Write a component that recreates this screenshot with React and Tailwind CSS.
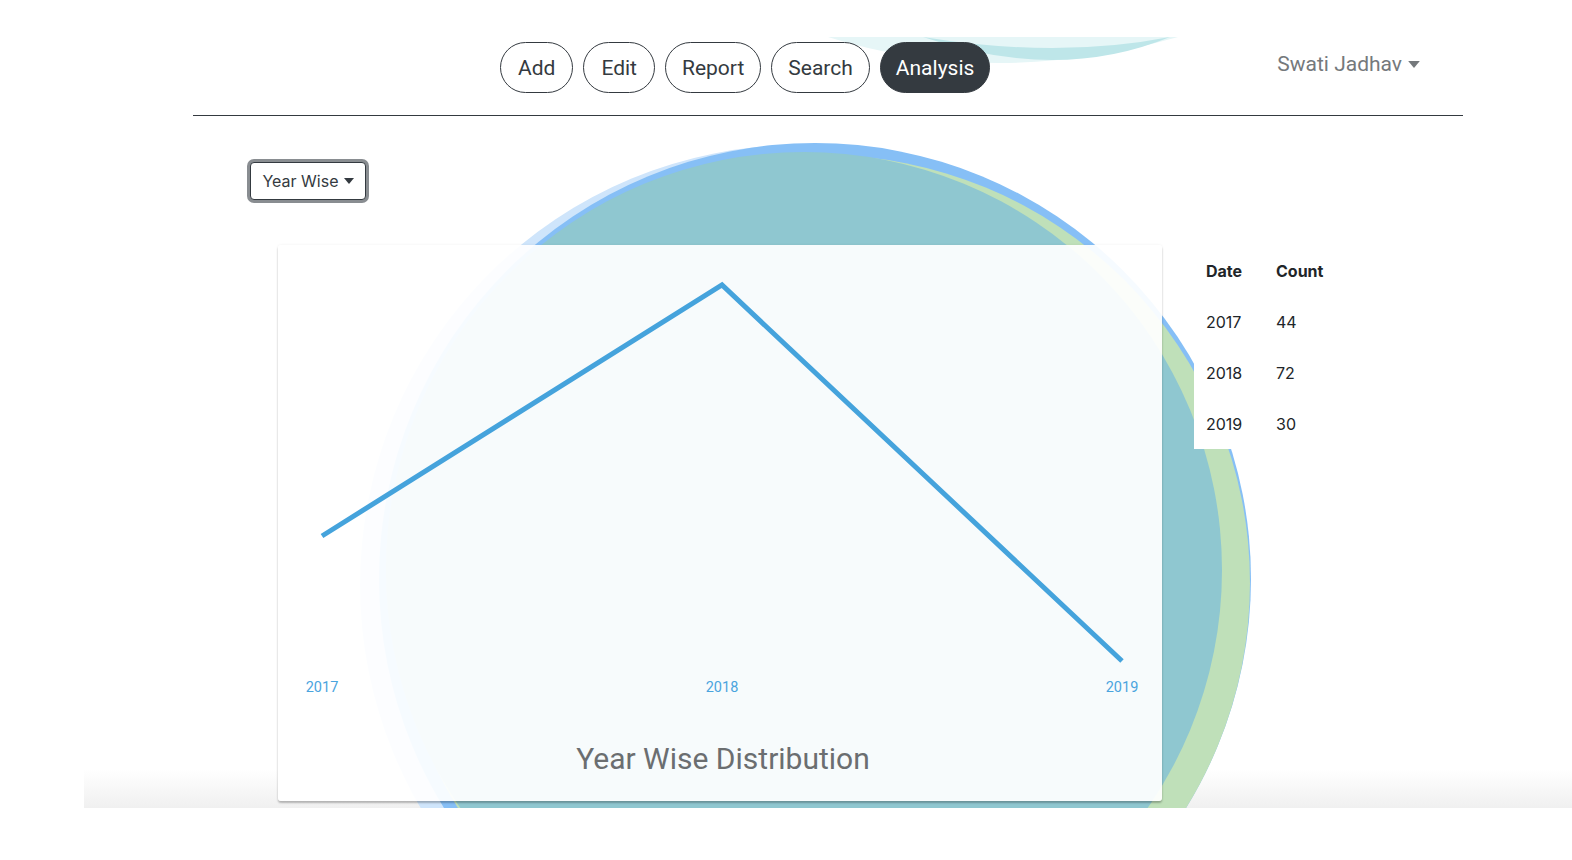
import React from "react";

const years = [
  { date: "2017", count: 44 },
  { date: "2018", count: 72 },
  { date: "2019", count: 30 },
];

const tabs = [
  { label: "Add", pad: "px-[17px]" },
  { label: "Edit", pad: "px-[17px]" },
  { label: "Report", pad: "px-[16px]" },
  { label: "Search", pad: "px-[16px]" },
  { label: "Analysis", pad: "px-[15px]", active: true },
];

function Caret({ className }) {
  return (
    <svg width="10" height="6" viewBox="0 0 10 6" className={className}>
      <path d="M0 0h10L5 6z" fill="currentColor" />
    </svg>
  );
}

function Backdrop() {
  return (
    <>
      {/* wave peeking in at the top */}
      <svg className="absolute left-[744px] top-0" width="350" height="30" viewBox="0 0 350 30">
        <path d="M0 0 Q165 52 350 0 Z" fill="#e6f6f7" />
        <path d="M95 0 Q230 46 342 0 Q230 22 95 0 Z" fill="#bee6e9" />
      </svg>
      {/* big circles behind the chart */}
      <svg className="absolute left-0 top-0" width="1488" height="771" viewBox="0 0 1488 771">
        <circle cx="716" cy="548" r="440" fill="#cfe5fb" />
        <circle cx="731" cy="542" r="436" fill="#86bff6" />
        <circle cx="744" cy="550" r="418" fill="#fcfbc8" />
        <circle cx="738" cy="546" r="428" fill="#bfe0b9" />
        <circle cx="720" cy="533" r="418" fill="#8fc7d0" />
      </svg>
    </>
  );
}

function Chart() {
  const pts = "44,291 444,40 844,416";
  return (
    <div className="w-[884px] h-[556px] shrink-0 bg-white/[0.93] rounded-[3px] shadow-[0_2px_2px_rgba(0,0,0,0.25),0_0_3px_rgba(0,0,0,0.06)] flex flex-col">
      <svg width="884" height="470" viewBox="0 0 884 470">
        <polyline points={pts} fill="none" stroke="#45a3dc" strokeWidth="5" />
        {["2017", "2018", "2019"].map((y, i) => (
          <text
            key={y}
            x={44 + i * 400}
            y={447}
            textAnchor="middle"
            fontSize="14.5"
            fill="#4aa4de"
            fontFamily="Roboto, sans-serif"
          >
            {y}
          </text>
        ))}
      </svg>
      <div className="text-center text-[30px] text-[#6b6e70] font-['Roboto',sans-serif] leading-none mt-[29px] pl-[6px]">
        Year Wise Distribution
      </div>
    </div>
  );
}

export default function App() {
  return (
    <div className="min-h-screen bg-white pt-[37px] pl-[84px]">
      <div className="relative w-[1488px] h-[771px] overflow-hidden bg-gradient-to-b from-white from-[95%] to-[#f0f0f0]">
        <Backdrop />
        <div className="relative">
          <div className="flex items-start h-[78px] pt-[5px]">
            <div className="flex gap-[10px] ml-[416px] font-['Roboto',sans-serif] text-[21px]">
              {tabs.map((t) => (
                <button
                  key={t.label}
                  className={
                    t.active
                      ? `h-[51px] pt-[3px] ${t.pad} rounded-full bg-[#343a40] text-white border border-[#343a40]`
                      : `h-[51px] pt-[3px] ${t.pad} rounded-full bg-white text-[#343a40] border border-[#343a40]`
                  }
                >
                  {t.label}
                </button>
              ))}
            </div>
            <div className="ml-auto mr-[152px] mt-[7px] flex items-center gap-[6px] text-[21px] text-[#75797c] font-['Roboto',sans-serif]">
              Swati Jadhav
              <Caret className="text-[#75797c] w-[12px] h-[7px]" />
            </div>
          </div>
          <div className="mx-[109px] border-t border-[#343a40]" />

          <button className="mt-[46px] ml-[166px] h-[38px] w-[116px] flex items-center justify-center gap-[5px] rounded-[4px] bg-white border border-[#343a40] ring-[3px] ring-[#898d91] text-[16px] text-[#343a40] font-['Inter',sans-serif]">
            Year Wise
            <Caret className="text-[#343a40]" />
          </button>

          <div className="flex items-start mt-[45px] ml-[194px]">
            <Chart />
            <table className="ml-[32px] bg-white text-[16px] text-[#212529] font-['Inter',sans-serif]">
              <thead>
                <tr className="h-[51px]">
                  <th className="w-[70px] pl-[12px] text-left font-bold">Date</th>
                  <th className="pl-[12px] pr-[12px] text-left font-bold">Count</th>
                </tr>
              </thead>
              <tbody>
                {years.map((r) => (
                  <tr key={r.date} className="h-[51px]">
                    <td className="pl-[12px]">{r.date}</td>
                    <td className="pl-[12px]">{r.count}</td>
                  </tr>
                ))}
              </tbody>
            </table>
          </div>
        </div>
      </div>
    </div>
  );
}
